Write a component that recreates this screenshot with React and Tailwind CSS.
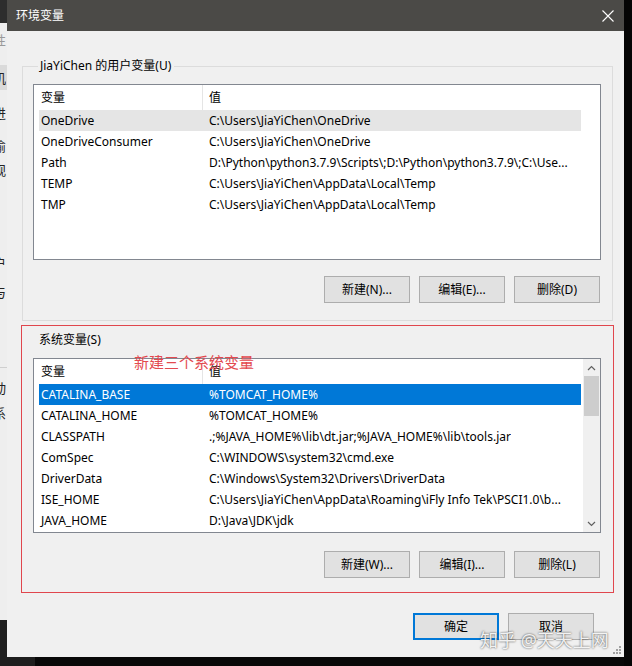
const userVars = [
  ['OneDrive', 'C:\\Users\\JiaYiChen\\OneDrive'],
  ['OneDriveConsumer', 'C:\\Users\\JiaYiChen\\OneDrive'],
  ['Path', 'D:\\Python\\python3.7.9\\Scripts\\;D:\\Python\\python3.7.9\\;C:\\Use...'],
  ['TEMP', 'C:\\Users\\JiaYiChen\\AppData\\Local\\Temp'],
  ['TMP', 'C:\\Users\\JiaYiChen\\AppData\\Local\\Temp'],
];

const sysVars = [
  ['CATALINA_BASE', '%TOMCAT_HOME%'],
  ['CATALINA_HOME', '%TOMCAT_HOME%'],
  ['CLASSPATH', '.;%JAVA_HOME%\\lib\\dt.jar;%JAVA_HOME%\\lib\\tools.jar'],
  ['ComSpec', 'C:\\WINDOWS\\system32\\cmd.exe'],
  ['DriverData', 'C:\\Windows\\System32\\Drivers\\DriverData'],
  ['ISE_HOME', 'C:\\Users\\JiaYiChen\\AppData\\Roaming\\iFly Info Tek\\PSCI1.0\\b...'],
  ['JAVA_HOME', 'D:\\Java\\JDK\\jdk'],
];

function Chevron({ up }) {
  return (
    <svg width="9" height="6" viewBox="0 0 9 6">
      <path
        d={up ? 'M1 5 L4.5 1.5 L8 5' : 'M1 1 L4.5 4.5 L8 1'}
        fill="none"
        stroke="#606060"
        strokeWidth="1.2"
      />
    </svg>
  );
}

function Scrollbar() {
  return (
    <div className="flex w-[17px] flex-col bg-[#f0f0f0]">
      <div className="flex h-[17px] items-center justify-center">
        <Chevron up />
      </div>
      <div className="mx-px h-[40px] bg-[#cdcdcd]" />
      <div className="flex-1" />
      <div className="flex h-[17px] items-center justify-center">
        <Chevron />
      </div>
    </div>
  );
}

function VarList({ rows, height, active, tone, scrollbar }) {
  return (
    <div className={`flex border border-[#828790] bg-white ${height}`}>
      <div className="min-w-0 flex-1">
        <div className="flex h-[25px] items-center">
          <div className="flex h-full w-[169px] items-center border-r border-[#e5e5e5] pl-[7px]">变量</div>
          <div className="pl-[6px]">值</div>
        </div>
        {rows.map(([name, value], i) => {
          const on = i === active;
          const bg = on ? (tone === 'blue' ? 'bg-[#0078d7] text-white' : 'bg-[#e5e5e5]') : '';
          return (
            <div key={name} className={`ml-[5px] flex h-[21px] w-[542px] items-center whitespace-nowrap ${bg}`}>
              <div className="w-[163px] overflow-hidden pl-[2px]">{name}</div>
              <div className="overflow-hidden pl-[7px]">{value}</div>
            </div>
          );
        })}
      </div>
      {scrollbar && <Scrollbar />}
    </div>
  );
}

function Btn({ children, focus }) {
  return (
    <button
      type="button"
      className={[
        'flex h-[27px] w-[86px] items-center justify-center bg-[#e1e1e1] text-[12px] text-black',
        focus ? 'border-2 border-[#0078d7]' : 'border border-[#adadad]',
      ].join(' ')}
    >
      {children}
    </button>
  );
}

function Frag({ ch, className = '' }) {
  return (
    <div className={`h-[16px] overflow-hidden text-[13px] leading-[16px] ${className}`}>
      <span className="-ml-[7px] block">{ch}</span>
    </div>
  );
}

function BackWindow() {
  return (
    <div className="flex w-[7px] flex-col">
      <div className="h-[23px] bg-[#2d2d2d]" />
      <div className="flex h-[597px] flex-col bg-[#eeeeee] text-[#222]">
        <Frag ch="性" className="mt-[9px] text-[#999]" />
        <div className="mt-[17px] flex h-[25px] items-center bg-[#dadada]">
          <Frag ch="机" />
        </div>
        <Frag ch="进" className="mt-[15px]" />
        <Frag ch="偷" className="mt-[17px]" />
        <Frag ch="观" className="mt-[8px]" />
        <Frag ch="户" className="mt-[77px]" />
        <Frag ch="与" className="mt-[13px]" />
        <div className="mt-[67px] h-px bg-[#cfcfcf]" />
        <Frag ch="动" className="mt-[12px]" />
        <Frag ch="系" className="mt-[9px]" />
      </div>
      <div className="flex-1 bg-[#1e1e1e]" />
    </div>
  );
}

export default function App() {
  return (
    <div className="flex h-[666px] w-[632px] overflow-hidden bg-[#060606] font-['Noto_Sans','Noto_Sans_CJK_SC',sans-serif] text-[12px] text-black">
      <BackWindow />

      <div className="flex w-[617px] flex-col">
        <div className="flex h-[31px] items-center justify-between bg-[#4b4a47] pl-[9px] pr-[10px] text-white">
          <span className="text-[12px]">环境变量</span>
          <svg width="12" height="12" viewBox="0 0 12 12">
            <path d="M0.5 0.5 L11.5 11.5 M11.5 0.5 L0.5 11.5" stroke="#fff" strokeWidth="1.1" />
          </svg>
        </div>

        <div className="relative h-[626px] bg-[#f0f0f0] pl-[15px] pr-[11px] pt-[27px]">
          <fieldset className="w-[591px] border border-[#dcdcdc] pb-[17px] pl-[10px] pr-[11px]">
            <legend className="ml-[5px] pl-[2px] pr-[3px] leading-[16px]">JiaYiChen 的用户变量(U)</legend>
            <div className="mt-[10px]">
              <VarList rows={userVars} height="h-[176px]" active={0} tone="grey" />
            </div>
            <div className="mt-[16px] flex justify-end gap-[9px] pr-[1px]">
              <Btn>新建(N)...</Btn>
              <Btn>编辑(E)...</Btn>
              <Btn>删除(D)</Btn>
            </div>
          </fieldset>

          <div className="-ml-px mt-[4px] w-[593px] border border-[#e0464d] pb-px">
            <fieldset className="mt-[6px] w-[591px] border border-transparent pb-[12px] pl-[10px] pr-[11px]">
              <legend className="ml-[4px] pl-[2px] pr-[3px] leading-[16px]">系统变量(S)</legend>
              <div className="mt-[10px]">
                <VarList rows={sysVars} height="h-[175px]" active={0} tone="blue" scrollbar />
              </div>
              <div className="mt-[18px] flex justify-end gap-[9px] pr-[1px]">
                <Btn>新建(W)...</Btn>
                <Btn>编辑(I)...</Btn>
                <Btn>删除(L)</Btn>
              </div>
            </fieldset>
          </div>

          <div className="mr-[19px] mt-[20px] flex justify-end gap-[9px]">
            <Btn focus>确定</Btn>
            <Btn>取消</Btn>
          </div>

          <div className="absolute left-[127px] top-[324px] text-[15px] leading-[15px] text-[#e34a4f]">
            新建三个系统变量
          </div>

          <div className="absolute left-[473px] top-[600px] whitespace-nowrap text-[18px] leading-[18px] text-white/90 [text-shadow:0_0_2px_rgba(0,0,0,0.8)]">
            知乎 @天天上网
          </div>

          <svg className="absolute bottom-[3px] right-[3px]" width="8" height="8" viewBox="0 0 8 8">
            <g fill="#a0a0a0">
              <rect x="6" y="0" width="2" height="2" />
              <rect x="3" y="3" width="2" height="2" />
              <rect x="6" y="3" width="2" height="2" />
              <rect x="0" y="6" width="2" height="2" />
              <rect x="3" y="6" width="2" height="2" />
              <rect x="6" y="6" width="2" height="2" />
            </g>
          </svg>
        </div>

        <div className="flex flex-1">
          <div className="w-[28px] bg-[#1e1e1e]" />
          <div className="flex-1 bg-[#080808]" />
        </div>
      </div>

      <div className="flex-1 bg-[#050505]" />
    </div>
  );
}
